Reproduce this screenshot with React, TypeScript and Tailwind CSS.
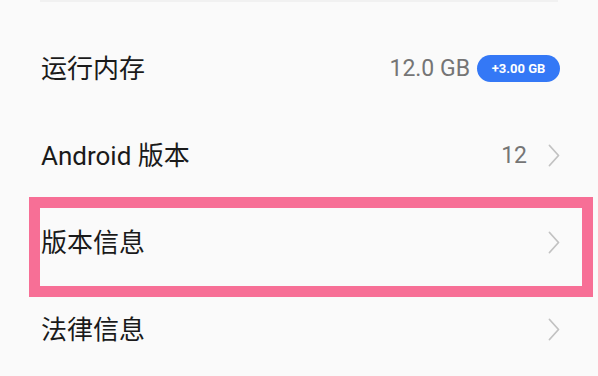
import React from "react";

const Chevron = () => (
  <svg width="12" height="23" viewBox="0 0 12 23" fill="none" className="shrink-0">
    <polyline points="1.5,1.5 10.5,11.5 1.5,21.5" stroke="#c2c2c2" strokeWidth="1.8" strokeLinecap="round" strokeLinejoin="round" />
  </svg>
);

const font = { fontFamily: 'Roboto, "Noto Sans CJK SC", sans-serif' };

function Row({ label, children }: { label: string; children?: React.ReactNode }) {
  return (
    <div className="h-[87px] flex items-center justify-between pl-[41px] pr-[38px]">
      <span className="text-[26px] leading-none text-[#1a1a1a]">{label}</span>
      <div className="flex items-center">{children}</div>
    </div>
  );
}

export default function App() {
  return (
    <div className="relative w-[598px] h-[376px] bg-[#fafafa] overflow-hidden" style={font}>
      <div className="mx-[40px] h-[2px] bg-[#f1f1f1]" />
      <div className="h-[23px]" />
      <Row label="运行内存">
        <span className="text-[23px] leading-none text-[#757575]">12.0 GB</span>
        <span className="ml-[7px] h-[27px] w-[83px] rounded-full bg-[#3478f6] text-white text-[13px] font-bold flex items-center justify-center leading-none">
          +3.00 GB
        </span>
      </Row>
      <Row label="Android 版本">
        <span className="text-[23px] leading-none text-[#757575] mr-[21px]">12</span>
        <Chevron />
      </Row>
      <Row label="版本信息">
        <Chevron />
      </Row>
      <Row label="法律信息">
        <Chevron />
      </Row>
      <div className="absolute left-[29px] top-[197px] w-[564px] h-[100px] border-[11px] border-[#f76f96]" />
    </div>
  );
}
